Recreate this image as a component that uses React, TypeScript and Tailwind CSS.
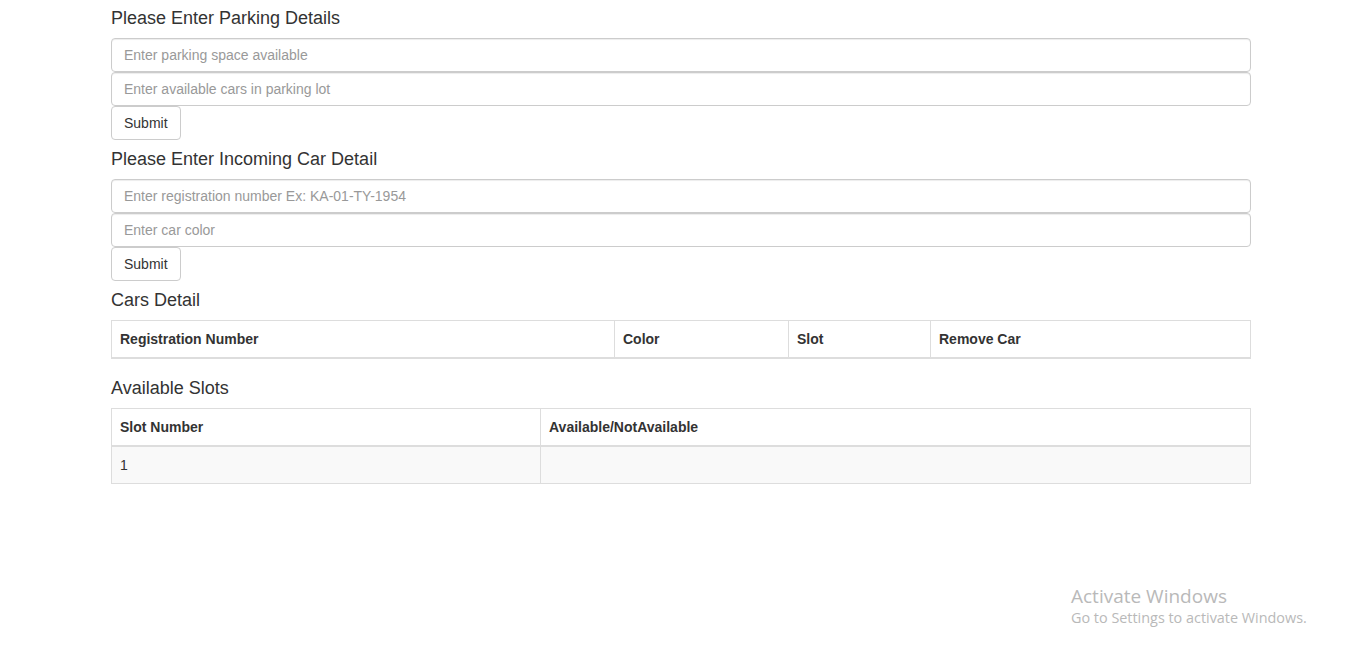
import React from 'react';

const FONT = { fontFamily: '"Liberation Sans", Arial, Helvetica, sans-serif' };

const inputClass =
  'block w-full h-[34px] px-3 py-1.5 text-sm text-[#555] bg-white border border-[#ccc] rounded-[4px] shadow-[inset_0_1px_1px_rgba(0,0,0,0.075)] placeholder:text-[#999] outline-none';

const btnClass =
  'inline-block h-[34px] px-3 py-1.5 text-sm leading-5 text-[#333] bg-white border border-[#ccc] rounded-[4px]';

const thClass = 'p-2 text-left font-bold leading-5 border border-[#ddd] border-b-2';
const tdClass = 'p-2 leading-5 border border-[#ddd]';

function Heading({ children }: { children: React.ReactNode }) {
  return <h4 className="mt-[10px] mb-[10px] text-[18px] leading-[19px] font-medium text-[#333]">{children}</h4>;
}

export default function App() {
  return (
    <div className="relative min-h-[660px] bg-white text-sm text-[#333]" style={FONT}>
      <div className="ml-[111px] w-[1140px] -mt-px">
        <Heading>Please Enter Parking Details</Heading>
        <input className={inputClass} placeholder="Enter parking space available" />
        <input className={inputClass} placeholder="Enter available cars in parking lot" />
        <button className={btnClass}>Submit</button>

        <Heading>Please Enter Incoming Car Detail</Heading>
        <input className={inputClass} placeholder="Enter registration number Ex: KA-01-TY-1954" />
        <input className={inputClass} placeholder="Enter car color" />
        <button className={btnClass}>Submit</button>

        <Heading>Cars Detail</Heading>
        <table className="w-full mb-5 border-collapse border border-[#ddd]">
          <thead>
            <tr>
              <th className={`w-[503px] ${thClass}`}>Registration Number</th>
              <th className={`w-[174px] ${thClass}`}>Color</th>
              <th className={`w-[142px] ${thClass}`}>Slot</th>
              <th className={thClass}>Remove Car</th>
            </tr>
          </thead>
        </table>

        <Heading>Available Slots</Heading>
        <table className="w-full mb-5 border-collapse border border-[#ddd]">
          <thead>
            <tr>
              <th className={`w-[429px] ${thClass}`}>Slot Number</th>
              <th className={thClass}>Available/NotAvailable</th>
            </tr>
          </thead>
          <tbody>
            <tr className="bg-[#f9f9f9]">
              <td className={tdClass}>1</td>
              <td className={tdClass}></td>
            </tr>
          </tbody>
        </table>
      </div>

      {/* windows watermark */}
      <div
        className="absolute left-[1071px] top-[575px] text-[#b9b9b9] pointer-events-none"
        style={{ fontFamily: '"Open Sans", "Noto Sans", sans-serif' }}
      >
        <div className="text-[19px] leading-6">Activate Windows</div>
        <div className="text-[14.4px] leading-5">Go to Settings to activate Windows.</div>
      </div>
    </div>
  );
}
